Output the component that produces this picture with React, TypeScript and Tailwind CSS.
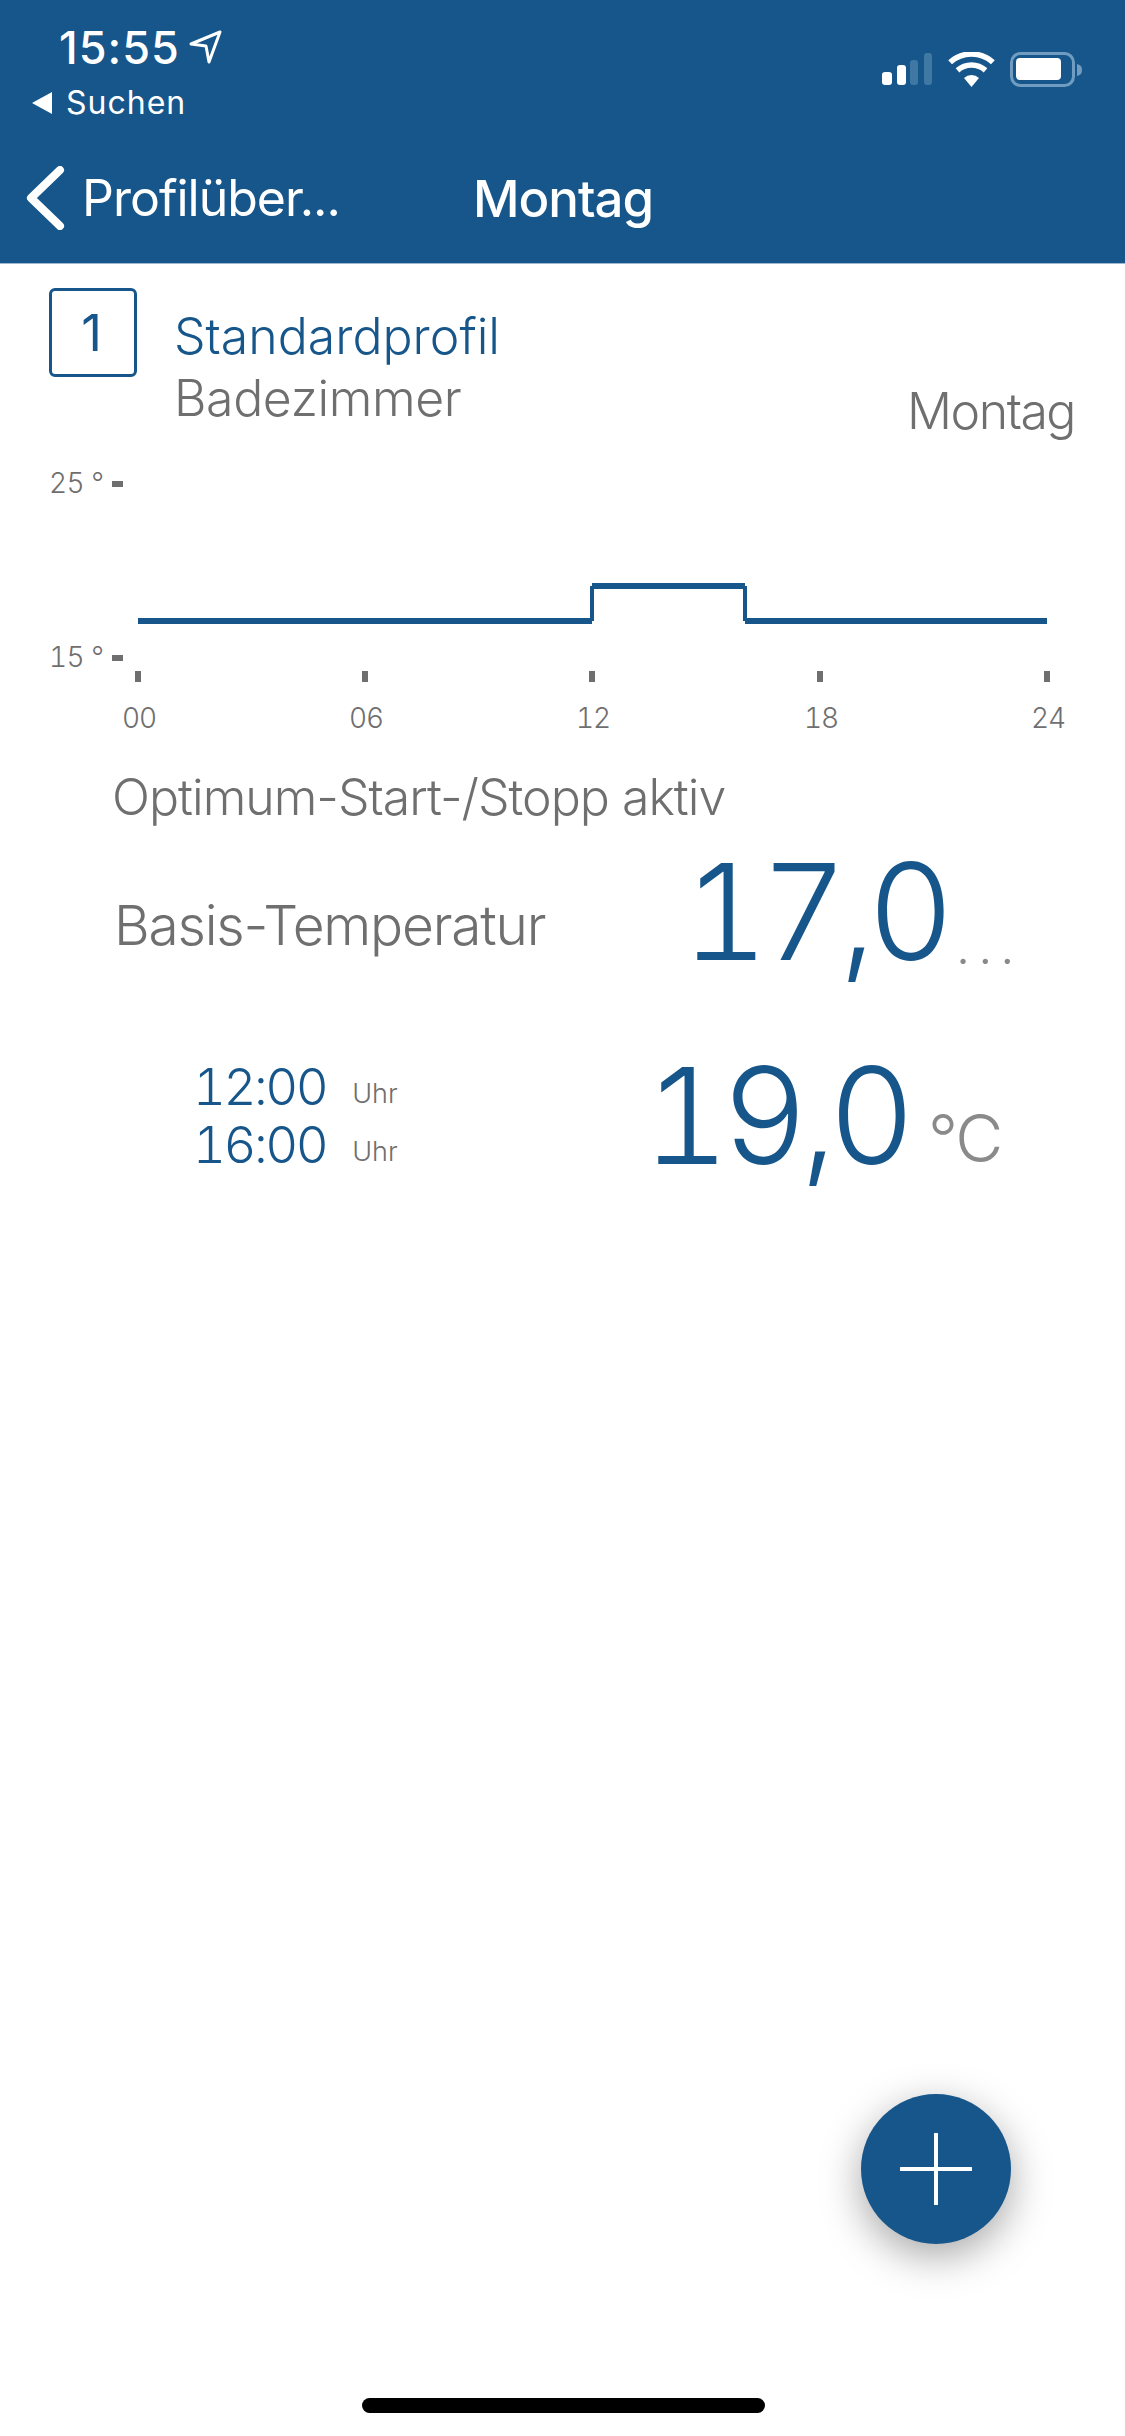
import React from 'react';

const StatusIcons = () => (
  <svg width="204" height="36" viewBox="0 0 204 36" className="block">
    <rect x="0" y="20" width="10" height="13" rx="3" fill="#fff" />
    <rect x="15" y="13" width="9" height="20" rx="3" fill="#fff" />
    <rect x="28" y="8" width="8" height="25" rx="3" fill="#3e78a3" />
    <rect x="42" y="1" width="8" height="32" rx="3" fill="#3e78a3" />
    <path d="M68.1 10.2 A32 32 0 0 1 110.9 10.2 M75.5 18.4 A21 21 0 0 1 103.5 18.4" fill="none" stroke="#fff" strokeWidth="5.5" />
    <path d="M82 26 A11 11 0 0 1 97 26 L89.5 35 Z" fill="#fff" />
    <rect x="129.5" y="1.5" width="62" height="32" rx="9" fill="none" stroke="#6f9cc0" strokeWidth="3" />
    <rect x="134" y="6" width="45" height="22" rx="4" fill="#fff" />
    <path d="M195 12 c4 1 5 3 5 6 s-1 5 -5 6 Z" fill="#6f9cc0" />
  </svg>
);

const Chart = () => {
  const ticks = [
    { x: 138, label: '00' },
    { x: 365, label: '06' },
    { x: 592, label: '12' },
    { x: 820, label: '18' },
    { x: 1047, label: '24' },
  ];
  return (
    <svg width="1125" height="285" viewBox="0 0 1125 285" className="block tabular-nums" fontFamily="Inter, sans-serif" fontWeight="300" fontSize="28" letterSpacing="-1" fill="#6f6f6f">
      <text x="49" y="31" letterSpacing="-0.5">25 °</text>
      <rect x="112" y="19" width="11" height="6" />
      <text x="49" y="205" letterSpacing="-0.5">15 °</text>
      <rect x="112" y="193" width="11" height="6" />
      <path d="M138 159 H592" stroke="#17568a" strokeWidth="6" fill="none" />
      <path d="M592 159 V124" stroke="#17568a" strokeWidth="4" fill="none" />
      <path d="M592 124 H745" stroke="#17568a" strokeWidth="6" fill="none" />
      <path d="M745 124 V159" stroke="#17568a" strokeWidth="4" fill="none" />
      <path d="M745 159 H1047" stroke="#17568a" strokeWidth="6" fill="none" />
      {ticks.map((t) => (
        <g key={t.label}>
          <rect x={t.x - 3} y="209" width="6" height="11" />
          <text x={t.x + 1} y="266" textAnchor="middle">{t.label}</text>
        </g>
      ))}
    </svg>
  );
};

const App: React.FC = () => {
  return (
    <div className="relative w-[1125px] h-[2436px] bg-white overflow-hidden font-['Inter',sans-serif] font-light">
      <header className="h-[264px] bg-[#17568a] text-white font-normal border-b border-b-[#9db8cf]">
        <div className="flex justify-between items-start h-[165px]">
          <div className="pl-[32px] pt-[24px]">
            <div className="flex items-center pl-[27px] h-[46px]">
              <span className="text-[45px] leading-none font-medium tracking-[1px]">15:55</span>
              <svg width="34" height="34" viewBox="0 0 34 34" className="ml-[8px]">
                <path d="M32 2 L3 14 L18 16 L21 32 Z" fill="none" stroke="#fff" strokeWidth="3" strokeLinejoin="round" />
              </svg>
            </div>
            <div className="flex items-center mt-[15px] h-[36px]">
              <svg width="22" height="22" viewBox="0 0 22 22">
                <path d="M0 11 L20 0 V22 Z" fill="#fff" />
              </svg>
              <span className="ml-[12px] text-[32px] leading-none tracking-[1px]">Suchen</span>
            </div>
          </div>
          <div className="pt-[52px] pr-[39px]">
            <StatusIcons />
          </div>
        </div>
        <div className="relative flex items-center h-[66px] pl-[25px]">
          <svg width="40" height="64" viewBox="0 0 40 64">
            <path d="M35 4 L6 32 L35 60" fill="none" stroke="#fff" strokeWidth="8" strokeLinecap="round" strokeLinejoin="round" />
          </svg>
          <span className="ml-[17px] text-[50px] leading-none tracking-[-1px]">Profilüber...</span>
          <span className="ml-[133px] text-[51px] leading-none font-medium tracking-[-1px]">Montag</span>
        </div>
      </header>

      <section className="flex items-start pl-[49px] pr-[50px] pt-[24px] h-[198px]">
        <div className="flex items-center justify-center w-[88px] h-[89px] pr-[3px] border-[3px] border-[#17568a] rounded-[6px] text-[#17568a] text-[51px] leading-none font-normal">1</div>
        <div className="ml-[37px] mt-[23px] flex-1">
          <div className="text-[50px] leading-none h-[62px] text-[#17568a]">Standardprofil</div>
          <div className="text-[50px] leading-none tracking-[-0.4px] text-[#6f6f6f]">Badezimmer</div>
        </div>
        <div className="mt-[98px] text-[50px] leading-none tracking-[-1.5px] text-[#6f6f6f]">Montag</div>
      </section>

      <Chart />

      <div className="pl-[112px] mt-[25px] text-[50px] leading-none tracking-[-1px] text-[#6f6f6f] h-[60px]">Optimum-Start-/Stopp aktiv</div>

      <div className="flex items-center pl-[114px] mt-[14px] h-[130px]">
        <span className="w-[568px] mt-[28px] text-[55px] leading-none tracking-[-1.2px] text-[#6f6f6f]">Basis-Temperatur</span>
        <span className="text-[134px] leading-none tabular-nums tracking-[-8px] text-[#17568a]">17,0</span>
        <span className="ml-[10px] mt-[70px] text-[50px] leading-none text-[#8a8a8a] tracking-[8px]">...</span>
      </div>

      <div className="flex items-center pl-[193px] mt-[74px] h-[130px]">
        <div className="w-[450px] mb-[6px]">
          <div className="flex items-end h-[58px]">
            <span className="text-[51px] leading-none tabular-nums tracking-[-2.5px] text-[#17568a]">12:00</span>
            <span className="ml-[26px] mb-[2px] text-[27px] leading-[32px] text-[#6f6f6f]">Uhr</span>
          </div>
          <div className="flex items-end h-[58px]">
            <span className="text-[51px] leading-none tabular-nums tracking-[-2.5px] text-[#17568a]">16:00</span>
            <span className="ml-[26px] mb-[2px] text-[27px] leading-[32px] text-[#6f6f6f]">Uhr</span>
          </div>
        </div>
        <span className="text-[134px] leading-none tabular-nums tracking-[-8px] text-[#17568a]">19,0</span>
        <span className="ml-[21px] mt-[46px] text-[66px] leading-none tracking-[-2px] text-[#8a8a8a]">°C</span>
      </div>

      <button className="absolute left-[861px] top-[2094px] flex items-center justify-center w-[150px] h-[150px] rounded-full bg-[#17568a] shadow-[0_12px_40px_rgba(0,0,0,0.35)]">
        <svg width="72" height="72" viewBox="0 0 72 72">
          <path d="M36 1 V71 M1 36 H71" stroke="#fff" strokeWidth="4" strokeLinecap="round" />
        </svg>
      </button>

      <div className="absolute left-[362px] top-[2398px] w-[403px] h-[15px] rounded-full bg-black" />
    </div>
  );
};

export default App;
